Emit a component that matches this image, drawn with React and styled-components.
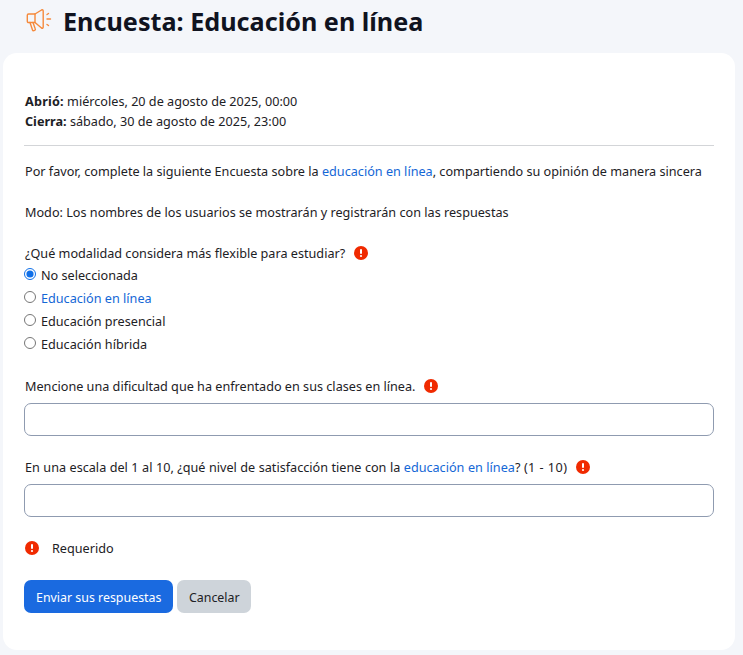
import styled, { createGlobalStyle } from "styled-components";

const Global = createGlobalStyle`
  html, body {
    margin: 0;
    background: #f4f6fa;
    font-family: "Noto Sans", "Liberation Sans", sans-serif;
    font-size: 12.65px;
    color: #1d2125;
  }
  * { box-sizing: border-box; }
`;

const Page = styled.div`
  width: 743px;
  height: 655px;
  overflow: hidden;
`;
const Heading = styled.header`
  height: 53px;
  padding: 0 0 11px 26px;
  display: flex;
  align-items: center;
  gap: 11px;
`;
const Title = styled.h1`
  margin: 0;
  font-size: 25.2px;
  line-height: 30px;
  font-weight: 700;
  color: #10131f;
`;
const Card = styled.main`
  width: 732px;
  height: 597px;
  margin-left: 3px;
  padding: 38px 21px 0;
  background: #fff;
  border-radius: 14px;
`;
const Dates = styled.div`
  line-height: 20px;
  padding-bottom: 14px;
  border-bottom: 1px solid #d3d5d8;
  & > div { height: 20px; padding-left: 1px; }
`;
const Strong = styled.strong`
  font-weight: 700;
  letter-spacing: ${(p) => p.$track || 0}px;
`;
const Para = styled.p`
  margin: ${(p) => p.$top}px 0 0;
  padding-left: 1px;
  line-height: 20px;
  white-space: nowrap;
`;
const Link = styled.span`
  color: #1467d6;
`;
const Label = styled.div`
  margin-top: ${(p) => p.$top}px;
  padding-left: 1px;
  line-height: 20px;
  display: flex;
  align-items: center;
  gap: 9px;
  white-space: nowrap;
  word-spacing: ${(p) => p.$spread || 0}px;
`;
const Range = styled.span`
  letter-spacing: 0.45px;
  word-spacing: 0;
`;
const Option = styled.label`
  height: 23px;
  display: flex;
  align-items: center;
  gap: 5px;
  color: ${(p) => p.$color || "inherit"};
`;
const Radio = styled.input.attrs({ type: "radio" })`
  width: 12px;
  height: 12px;
  margin: 0 0 1px;
  accent-color: #0f6fe8;
`;
const TextBox = styled.input.attrs({ type: "text" })`
  display: block;
  width: 690px;
  height: 33px;
  margin-top: 7px;
  border: 1px solid #8f9bb0;
  border-radius: 7px;
  background: #fff;
`;
const Required = styled.div`
  margin-top: 21px;
  height: 20px;
  padding-left: 1px;
  display: flex;
  align-items: center;
  gap: 13px;
`;
const Buttons = styled.div`
  margin-top: 22px;
  display: flex;
  gap: 4px;
`;
const Button = styled.button`
  height: 33px;
  padding: 1px ${(p) => (p.$primary ? 12 : 11.5)}px 0;
  border: 0;
  border-radius: 7px;
  font: inherit;
  font-size: 12.4px;
  color: ${(p) => (p.$primary ? "#fff" : "#1d2125")};
  background: ${(p) => (p.$primary ? "#1a6ae0" : "#ced4da")};
`;
const IconSvg = styled.svg`
  flex: none;
  display: block;
`;

const Megaphone = () => (
  <IconSvg width="26" height="24" viewBox="0 0 26 24" fill="none" stroke="#f58a3c" strokeWidth="1.4" strokeLinecap="round" strokeLinejoin="round">
    <path d="M2.5 5 H9 L15.5 1 c1-.5 1.7 0 1.7 1 V18 c0 1-.7 1.5-1.7 1 L9 13.5 H2.5 c-.7 0-1.2-.5-1.2-1.2 V6.2 c0-.7 .5-1.2 1.2-1.2 z" />
    <path d="M9 5 V13.5" />
    <path d="M4 13.5 l2.5 7.5 c.2 .6 .8 .8 1.4 .6 l.8-.3 c.6-.2 .8-.8 .6-1.3 L7 13.5" />
    <path d="M21 5.5 l1.5-1 M21 10 h3.5 M21 15.5 l1.5 1" />
  </IconSvg>
);

const Alert = () => (
  <IconSvg width="14" height="14" viewBox="0 0 14 14">
    <circle cx="7" cy="7" r="7" fill="#f02a00" />
    <rect x="6" y="3" width="2" height="5" rx="1" fill="#fff" />
    <circle cx="7" cy="10" r="1.1" fill="#fff" />
  </IconSvg>
);

export default function App() {
  return (
    <Page>
      <Global />
      <Heading>
        <Megaphone />
        <Title>Encuesta: Educación en línea</Title>
      </Heading>
      <Card>
        <Dates>
          <div><Strong $track={0.2}>Abrió:</Strong> miércoles, 20 de agosto de 2025, 00:00</div>
          <div><Strong>Cierra:</Strong> sábado, 30 de agosto de 2025, 23:00</div>
        </Dates>
        <Para $top={15}>
          Por favor, complete la siguiente Encuesta sobre la <Link>educación en línea</Link>, compartiendo su opinión de manera sincera
        </Para>
        <Para $top={21}>Modo: Los nombres de los usuarios se mostrarán y registrarán con las respuestas</Para>
        <Label $top={21}>¿Qué modalidad considera más flexible para estudiar? <Alert /></Label>
        <div>
          <Option><Radio name="m" defaultChecked />No seleccionada</Option>
          <Option $color="#1467d6"><Radio name="m" />Educación en línea</Option>
          <Option><Radio name="m" />Educación presencial</Option>
          <Option><Radio name="m" />Educación híbrida</Option>
        </div>
        <Label $top={21}>Mencione una dificultad que ha enfrentado en sus clases en línea. <Alert /></Label>
        <TextBox />
        <Label $top={21} $spread={0.2}>
          <span>En una escala del 1 al 10, ¿qué nivel de satisfacción tiene con la <Link>educación en línea</Link>? <Range>(1 - 10)</Range></span> <Alert />
        </Label>
        <TextBox />
        <Required><Alert />Requerido</Required>
        <Buttons>
          <Button $primary>Enviar sus respuestas</Button>
          <Button>Cancelar</Button>
        </Buttons>
      </Card>
    </Page>
  );
}
